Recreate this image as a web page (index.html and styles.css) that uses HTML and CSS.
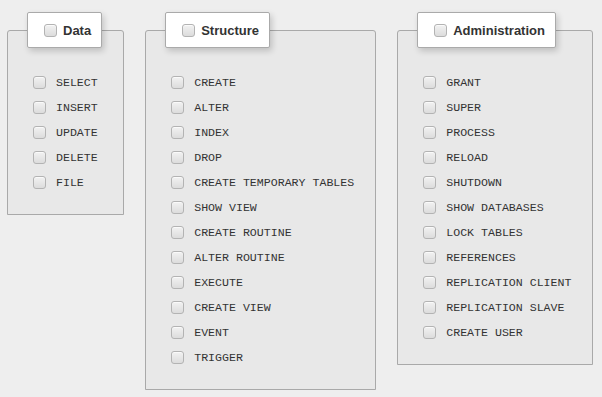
FILE: index.html
```html
<!DOCTYPE html>
<html lang="en">
<head>
    <meta charset="UTF-8">
    <meta name="viewport" content="width=device-width, initial-scale=1.0">
    <title>Privileges</title>
    <link rel="stylesheet" href="styles.css">
</head>
<body>
    <div class="privs">
        <fieldset class="group">
            <legend class="group-title"><input type="checkbox"> <span>Data</span></legend>
            <ul class="priv-list">
                <li><input type="checkbox"><label>SELECT</label></li>
                <li><input type="checkbox"><label>INSERT</label></li>
                <li><input type="checkbox"><label>UPDATE</label></li>
                <li><input type="checkbox"><label>DELETE</label></li>
                <li><input type="checkbox"><label>FILE</label></li>
            </ul>
        </fieldset>

        <fieldset class="group">
            <legend class="group-title"><input type="checkbox"> <span>Structure</span></legend>
            <ul class="priv-list">
                <li><input type="checkbox"><label>CREATE</label></li>
                <li><input type="checkbox"><label>ALTER</label></li>
                <li><input type="checkbox"><label>INDEX</label></li>
                <li><input type="checkbox"><label>DROP</label></li>
                <li><input type="checkbox"><label>CREATE TEMPORARY TABLES</label></li>
                <li><input type="checkbox"><label>SHOW VIEW</label></li>
                <li><input type="checkbox"><label>CREATE ROUTINE</label></li>
                <li><input type="checkbox"><label>ALTER ROUTINE</label></li>
                <li><input type="checkbox"><label>EXECUTE</label></li>
                <li><input type="checkbox"><label>CREATE VIEW</label></li>
                <li><input type="checkbox"><label>EVENT</label></li>
                <li><input type="checkbox"><label>TRIGGER</label></li>
            </ul>
        </fieldset>

        <fieldset class="group">
            <legend class="group-title"><input type="checkbox"> <span>Administration</span></legend>
            <ul class="priv-list">
                <li><input type="checkbox"><label>GRANT</label></li>
                <li><input type="checkbox"><label>SUPER</label></li>
                <li><input type="checkbox"><label>PROCESS</label></li>
                <li><input type="checkbox"><label>RELOAD</label></li>
                <li><input type="checkbox"><label>SHUTDOWN</label></li>
                <li><input type="checkbox"><label>SHOW DATABASES</label></li>
                <li><input type="checkbox"><label>LOCK TABLES</label></li>
                <li><input type="checkbox"><label>REFERENCES</label></li>
                <li><input type="checkbox"><label>REPLICATION CLIENT</label></li>
                <li><input type="checkbox"><label>REPLICATION SLAVE</label></li>
                <li><input type="checkbox"><label>CREATE USER</label></li>
            </ul>
        </fieldset>
    </div>
</body>
</html>
```

FILE: styles.css
```css
body {
    font-family: "Liberation Sans", Arial, sans-serif;
    background: #eeeeee;
    color: #333;
    margin: 0;
    padding: 0;
}
.privs {
    display: flex;
    align-items: flex-start;
    gap: 21px;
    padding: 12px 0 0 7px;
}
.group {
    margin: 0;
    padding: 0 21px 19px 19px;
    border: 1px solid #a9a9a9;
    border-radius: 3px 3px 0 0;
    background: #e8e8e8;
}
.group-title {
    display: flex;
    align-items: center;
    gap: 6px;
    height: 34px;
    padding: 0 10px 0 16px;
    background: #fff;
    border: 1px solid #aaa;
    border-radius: 2px;
    box-shadow: 2px 3px 6px rgba(0, 0, 0, 0.18);
    font-size: 13px;
    font-weight: bold;
    color: #333;
}
.priv-list {
    list-style: none;
    margin: 22px 0 0 6px;
    padding: 0;
}
.priv-list li {
    display: flex;
    align-items: center;
    height: 25px;
}
.priv-list label {
    font-family: "Liberation Mono", "Courier New", monospace;
    font-size: 11.6px;
    color: #333;
    margin-left: 10px;
    white-space: nowrap;
}
/* checkbox look */
input[type="checkbox"] {
    appearance: none;
    -webkit-appearance: none;
    width: 13px;
    height: 13px;
    margin: 0;
    flex: none;
    border: 1px solid #b3b3b3;
    border-radius: 3px;
    background: linear-gradient(#f2f2f2, #dcdcdc);
    box-shadow: inset 0 1px 0 #fafafa;
}
```
